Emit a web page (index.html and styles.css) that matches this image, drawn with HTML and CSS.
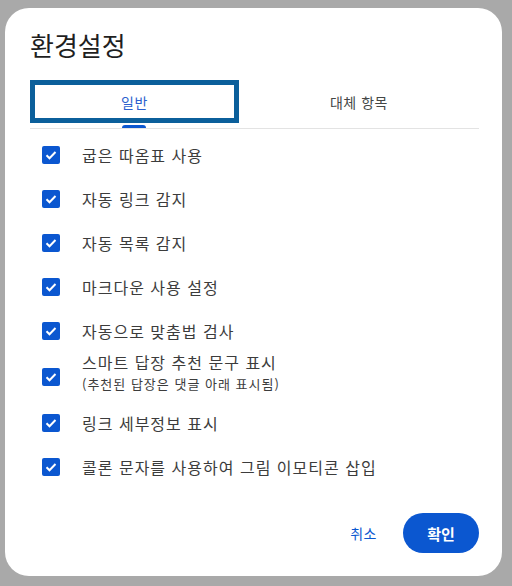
FILE: index.html
```html
<!DOCTYPE html>
<html lang="ko">
<head>
    <meta charset="UTF-8">
    <meta name="viewport" content="width=device-width, initial-scale=1.0">
    <title>환경설정</title>
    <link rel="stylesheet" href="styles.css">
</head>
<body>
    <div class="dialog">
        <h1 class="title">환경설정</h1>

        <div class="tabs">
            <div class="tab active">
                <div class="tab-label">일반</div>
                <div class="tab-indicator"></div>
            </div>
            <div class="tab">
                <div class="tab-label">대체 항목</div>
                <div class="tab-indicator"></div>
            </div>
        </div>

        <ul class="options">
            <li class="option">
                <span class="checkbox"><svg viewBox="0 0 18 18"><path d="M4.5 9.2l3 3 6-6.2"/></svg></span>
                <span class="label">굽은 따옴표 사용</span>
            </li>
            <li class="option">
                <span class="checkbox"><svg viewBox="0 0 18 18"><path d="M4.5 9.2l3 3 6-6.2"/></svg></span>
                <span class="label">자동 링크 감지</span>
            </li>
            <li class="option">
                <span class="checkbox"><svg viewBox="0 0 18 18"><path d="M4.5 9.2l3 3 6-6.2"/></svg></span>
                <span class="label">자동 목록 감지</span>
            </li>
            <li class="option">
                <span class="checkbox"><svg viewBox="0 0 18 18"><path d="M4.5 9.2l3 3 6-6.2"/></svg></span>
                <span class="label">마크다운 사용 설정</span>
            </li>
            <li class="option">
                <span class="checkbox"><svg viewBox="0 0 18 18"><path d="M4.5 9.2l3 3 6-6.2"/></svg></span>
                <span class="label">자동으로 맞춤법 검사</span>
            </li>
            <li class="option tall">
                <span class="checkbox"><svg viewBox="0 0 18 18"><path d="M4.5 9.2l3 3 6-6.2"/></svg></span>
                <span class="label">
                    스마트 답장 추천 문구 표시
                    <span class="hint">(추천된 답장은 댓글 아래 표시됨)</span>
                </span>
            </li>
            <li class="option">
                <span class="checkbox"><svg viewBox="0 0 18 18"><path d="M4.5 9.2l3 3 6-6.2"/></svg></span>
                <span class="label">링크 세부정보 표시</span>
            </li>
            <li class="option">
                <span class="checkbox"><svg viewBox="0 0 18 18"><path d="M4.5 9.2l3 3 6-6.2"/></svg></span>
                <span class="label">콜론 문자를 사용하여 그림 이모티콘 삽입</span>
            </li>
        </ul>

        <div class="actions">
            <button class="btn-text">취소</button>
            <button class="btn-filled">확인</button>
        </div>
    </div>
</body>
</html>
```

FILE: styles.css
```css
* {
    margin: 0;
    padding: 0;
    box-sizing: border-box;
    font-family: 'Noto Sans CJK KR', 'Noto Sans', sans-serif;
}

body {
    background: #a9a9a9;
    width: 512px;
    height: 586px;
    overflow: hidden;
}

.dialog {
    width: 497px;
    height: 568px;
    margin: 8px 0 0 5px;
    padding: 21px 23px 0 25px;
    border-radius: 24px;
    background: #fff;
}

.title {
    font-size: 26px;
    font-weight: 400;
    line-height: 32px;
    color: #1f1f1f;
    margin-bottom: 19px;
}

.tabs {
    display: flex;
    border-bottom: 1px solid #e3e3e3;
}

.tab {
    flex: 1 1 auto;
    display: flex;
    flex-direction: column;
    align-items: center;
}

.tab-label {
    width: 100%;
    height: 43px;
    display: flex;
    align-items: center;
    justify-content: center;
    font-size: 14px;
    letter-spacing: 0.5px;
    color: #444746;
    border: 5px solid transparent;
}

.tab-indicator {
    width: 24px;
    height: 3px;
    margin-top: 2px;
    border-radius: 3px 3px 0 0;
}

.tab.active .tab-label {
    color: #2b5fce;
    border-color: #0b5f9b;
}

.tab.active .tab-indicator {
    background: #0b57d0;
}

.options {
    list-style: none;
    padding-top: 4px;
}

.option {
    display: flex;
    align-items: center;
    height: 44px;
    padding-left: 12px;
}

.option.tall {
    height: 48px;
}

.checkbox {
    width: 18px;
    height: 18px;
    flex: none;
    border-radius: 2px;
    background: #0b57d0;
    margin-right: 22px;
}

.checkbox svg {
    display: block;
    width: 18px;
    height: 18px;
    fill: none;
    stroke: #fff;
    stroke-width: 2;
}

.label {
    font-size: 16px;
    line-height: 22px;
    letter-spacing: 1px;
    color: #3c3c3c;
    display: flex;
    flex-direction: column;
}

.tall .label {
    margin-top: -8px;
}

.hint {
    font-size: 13px;
    line-height: 22px;
    letter-spacing: 1px;
}

.actions {
    display: flex;
    justify-content: flex-end;
    align-items: center;
    gap: 14px;
    margin-top: 24px;
}

.btn-text {
    border: none;
    background: none;
    padding: 0 12px;
    height: 40px;
    font-size: 14px;
    letter-spacing: 0.5px;
    color: #0b57d0;
}

.btn-filled {
    border: none;
    width: 76px;
    height: 40px;
    border-radius: 20px;
    background: #0b57d0;
    color: #fff;
    font-size: 15px;
    font-weight: 700;
}
```
